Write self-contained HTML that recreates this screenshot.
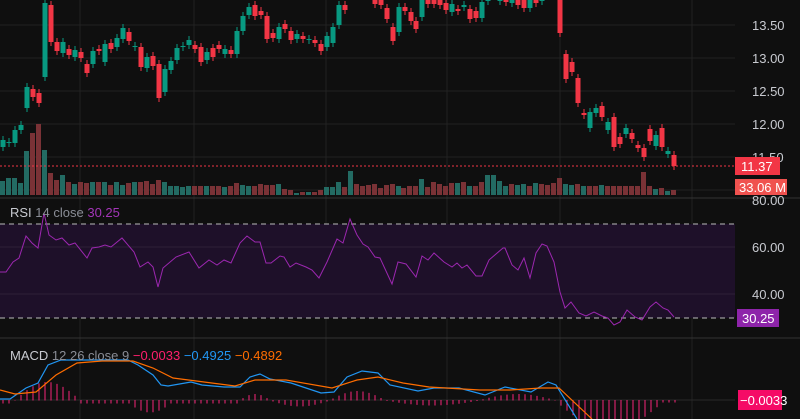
<!DOCTYPE html><html><head><meta charset="utf-8"><style>
html,body{margin:0;padding:0;background:#0f0f0f;width:800px;height:419px;overflow:hidden}
svg{display:block}
text{font-family:"Liberation Sans",sans-serif}
</style></head><body>
<svg id="s" width="800" height="419" xmlns="http://www.w3.org/2000/svg">
<rect width="800" height="419" fill="#0f0f0f"/>
<g id="grid" stroke="#222" stroke-width="1"></g>
<rect x="0" y="224" width="735" height="94" fill="#1e1029"/>
<line x1="0" y1="247" x2="735" y2="247" stroke="#2d1f38"/>
<line x1="0" y1="294" x2="735" y2="294" stroke="#2d1f38"/>
<line x1="0" y1="224" x2="735" y2="224" stroke="#bbb" stroke-dasharray="5,4"/>
<line x1="0" y1="318" x2="735" y2="318" stroke="#bbb" stroke-dasharray="5,4"/>
<line x1="0" y1="198" x2="800" y2="198" stroke="#333"/>
<line x1="0" y1="338" x2="800" y2="338" stroke="#333"/>
<line x1="0" y1="400" x2="735" y2="400" stroke="#2a2a2a"/>
<path fill="#236b63" d="M0,181h5V195h-5Z M6,178h5V195h-5Z M12,178h5V195h-5Z M18,183h5V195h-5Z M24,151h5V195h-5Z M42,150h5V195h-5Z M60,175h5V195h-5Z M72,184h5V195h-5Z M90,182h5V195h-5Z M102,182h5V195h-5Z M114,182h5V195h-5Z M120,185h5V195h-5Z M132,182h5V195h-5Z M162,182h5V195h-5Z M168,186h5V195h-5Z M174,186h5V195h-5Z M180,187h5V195h-5Z M186,186h5V195h-5Z M204,186h5V195h-5Z M222,187h5V195h-5Z M240,185h5V195h-5Z M246,186h5V195h-5Z M276,184h5V195h-5Z M294,193h5V195h-5Z M306,192h5V195h-5Z M324,187h5V195h-5Z M330,187h5V195h-5Z M336,182h5V195h-5Z M348,171h5V195h-5Z M396,186h5V195h-5Z M419,179h5V195h-5Z M455,183h5V195h-5Z M467,186h5V195h-5Z M485,175h5V195h-5Z M491,175h5V195h-5Z M497,181h5V195h-5Z M503,186h5V195h-5Z M515,185h5V195h-5Z M521,184h5V195h-5Z M533,183h5V195h-5Z M563,184h5V195h-5Z M569,185h5V195h-5Z M581,186h5V195h-5Z M599,185h5V195h-5Z M653,189h5V195h-5Z M665,191h5V195h-5Z"/>
<path fill="#7a3236" d="M30,133h5V195h-5Z M36,124h5V195h-5Z M48,173h5V195h-5Z M54,180h5V195h-5Z M66,182h5V195h-5Z M78,182h5V195h-5Z M84,183h5V195h-5Z M96,182h5V195h-5Z M108,185h5V195h-5Z M126,183h5V195h-5Z M138,182h5V195h-5Z M144,181h5V195h-5Z M150,184h5V195h-5Z M156,180h5V195h-5Z M192,186h5V195h-5Z M198,186h5V195h-5Z M210,186h5V195h-5Z M216,186h5V195h-5Z M228,186h5V195h-5Z M234,183h5V195h-5Z M252,186h5V195h-5Z M258,184h5V195h-5Z M264,185h5V195h-5Z M270,185h5V195h-5Z M282,189h5V195h-5Z M288,190h5V195h-5Z M300,192h5V195h-5Z M312,192h5V195h-5Z M318,190h5V195h-5Z M342,187h5V195h-5Z M354,184h5V195h-5Z M360,186h5V195h-5Z M366,185h5V195h-5Z M372,184h5V195h-5Z M378,188h5V195h-5Z M384,185h5V195h-5Z M390,184h5V195h-5Z M401,188h5V195h-5Z M407,186h5V195h-5Z M413,186h5V195h-5Z M425,187h5V195h-5Z M431,182h5V195h-5Z M437,184h5V195h-5Z M443,186h5V195h-5Z M449,183h5V195h-5Z M461,182h5V195h-5Z M473,186h5V195h-5Z M479,182h5V195h-5Z M509,184h5V195h-5Z M527,186h5V195h-5Z M539,184h5V195h-5Z M545,185h5V195h-5Z M551,183h5V195h-5Z M557,178h5V195h-5Z M575,184h5V195h-5Z M587,186h5V195h-5Z M593,186h5V195h-5Z M605,186h5V195h-5Z M611,186h5V195h-5Z M617,186h5V195h-5Z M623,186h5V195h-5Z M629,186h5V195h-5Z M635,186h5V195h-5Z M641,172h5V195h-5Z M647,186h5V195h-5Z M659,188h5V195h-5Z M671,190h5V195h-5Z"/>
<g id="can"></g><g id="hist"></g>
<line x1="0" y1="166" x2="735" y2="166" stroke="#f23645" stroke-dasharray="2,2"/>
<polyline fill="none" stroke="#9c27b0" stroke-width="1" points="0,272 6,272 13,262 19,258 26,236 32,243 38,248 44,213 49,235 56,240 62,238 69,245 75,243 87,258 92,248 99,247 105,245 111,247 122,238 134,252 140,267 148,262 153,267 158,287 163,268 176,257 189,252 199,268 209,260 217,265 224,260 231,263 240,243 247,236 255,242 260,242 266,263 271,263 280,256 284,257 290,267 296,263 306,267 312,270 319,278 327,262 337,239 343,243 350,219 357,235 363,244 368,247 375,257 380,258 392,284 398,262 406,264 416,277 422,256 428,260 434,253 444,262 452,267 457,263 462,268 467,265 476,276 482,276 489,260 503,248 505,248 512,265 518,270 524,258 530,278 536,253 542,244 547,246 554,262 560,292 565,308 571,302 579,313 586,316 594,312 602,316 608,318 614,325 620,322 627,310 635,317 642,320 650,307 656,302 663,308 668,310 674,317"/>
<polyline fill="none" stroke="#2196f3" stroke-width="1.2" points="0,399 10,399 26,388 38,383 48,365 61,360 82,360 128,360 138,365 153,375 161,385 168,386 191,382 202,385 224,387 240,387 250,377 260,374 270,379 291,383 306,388 321,393 334,392 347,377 362,371 378,373 390,385 418,391 434,388 459,388 485,395 505,387 531,392 548,382 556,385 577,419"/>
<polyline fill="none" stroke="#ff6d00" stroke-width="1.2" points="0,390 15,394 36,392 56,375 77,363 102,361 133,361 153,368 173,378 204,382 235,386 255,380 286,380 332,388 357,380 378,377 403,383 429,387 480,390 510,390 541,388 559,388 592,419"/>
<g font-size="13" fill="#c8cad0">
<text x="752" y="30">13.50</text><text x="752" y="63">13.00</text><text x="752" y="96">12.50</text><text x="752" y="129">12.00</text><text x="752" y="162">11.50</text>
<text x="752" y="205">80.00</text><text x="752" y="252">60.00</text><text x="752" y="299">40.00</text>
</g>
<rect x="735" y="157" width="45" height="18" fill="#f23645"/><text x="741" y="171" font-size="13" fill="#fff">11.37</text>
<rect x="735" y="179" width="52" height="16" fill="#f0524f"/><text x="739" y="192" font-size="13" fill="#fff">33.06 M</text>
<rect x="737" y="309" width="42" height="18" fill="#8e24aa"/><text x="742" y="323" font-size="13" fill="#fff">30.25</text>
<rect x="738" y="390" width="44" height="20" fill="#f50b66"/><text x="740" y="405" font-size="13" fill="#fff">−0.0033</text>
<text x="10" y="217" font-size="13" fill="#c8cad0">RSI <tspan fill="#8a8d96">14 close</tspan> <tspan fill="#a335b8">30.25</tspan></text>
<text x="10" y="360" font-size="13" fill="#c8cad0">MACD <tspan fill="#8a8d96">12 26 close 9</tspan> <tspan fill="#ff1f6d">−0.0033</tspan> <tspan fill="#2196f3">−0.4925</tspan> <tspan fill="#ff6d00">−0.4892</tspan></text>
</svg>
<script>
var NS="http://www.w3.org/2000/svg";
function el(p,t,a){var e=document.createElementNS(NS,t);for(var k in a)e.setAttribute(k,a[k]);document.getElementById(p).appendChild(e);}
[25,58,91,124,157,190].forEach(function(y){el("grid","line",{x1:0,y1:y,x2:735,y2:y});});
[80,194,326,447,560,692].forEach(function(x){el("grid","line",{x1:x,y1:0,x2:x,y2:419});});
var c=[[3,'g',140,147],[9,'g',142,143],[15,'g',130,143],[21,'g',125,130],[27,'g',87,108],[33,'r',89,97],[39,'r',93,103],[45,'g',3,77],[51,'r',5,42],[57,'r',42,51],[63,'g',42,53],[69,'r',49,55],[75,'g',50,57],[81,'r',52,58],[87,'r',64,73],[93,'g',51,64],[99,'r',49,51],[105,'g',44,62],[111,'r',43,49],[117,'g',38,47],[123,'g',28,39],[129,'r',32,41],[135,'g',46,47],[141,'r',47,67],[147,'g',57,68],[153,'r',56,66],[159,'r',64,98],[165,'g',69,92],[171,'g',61,70],[177,'g',48,60],[183,'g',46,47],[189,'g',40,45],[195,'r',45,49],[201,'r',47,62],[207,'g',52,60],[213,'r',48,57],[219,'r',45,49],[225,'g',49,54],[231,'r',50,54],[237,'g',31,54],[243,'g',16,31],[249,'g',7,15],[255,'r',5,16],[261,'r',11,15],[267,'r',16,39],[273,'r',33,38],[279,'g',27,39],[285,'r',24,29],[291,'r',31,40],[297,'g',34,39],[303,'r',36,39],[309,'g',39,40],[315,'r',40,43],[321,'r',44,51],[327,'g',36,47],[333,'g',27,43],[339,'g',5,25],[345,'r',5,10],[375,'r',-2,4],[381,'r',-2,5],[387,'r',8,19],[393,'r',27,41],[399,'g',7,32],[405,'r',7,11],[411,'r',12,21],[416,'r',21,29],[422,'g',0,17],[428,'r',0,4],[434,'r',0,4],[440,'r',0,5],[446,'r',3,10],[452,'g',4,12],[458,'r',9,11],[464,'g',5,7],[470,'r',9,19],[476,'r',11,18],[482,'g',2,18],[488,'g',0,1],[500,'g',0,1],[506,'r',0,2],[512,'g',0,3],[518,'r',0,5],[524,'r',0,8],[530,'g',0,8],[536,'r',0,3],[542,'g',0,1],[560,'r',-2,33],[566,'r',54,79],[572,'r',62,72],[578,'r',78,103],[584,'r',113,115],[590,'g',112,128],[596,'g',108,113],[602,'r',106,117],[608,'g',122,130],[614,'r',117,147],[620,'r',137,144],[626,'g',128,134],[632,'r',133,139],[638,'r',145,148],[644,'r',148,157],[650,'r',129,141],[656,'g',135,146],[662,'r',128,147],[668,'g',151,154],[674,'r',155,166]];
c.forEach(function(d){var col=d[1]=='g'?'#089981':'#f23645';var h=Math.max(1,d[3]-d[2]);
el("can","line",{x1:d[0],x2:d[0],y1:d[2]-4,y2:d[3]+4,stroke:col});
el("can","rect",{x:d[0]-2.5,y:d[2],width:5,height:h,fill:col});});
for(var x=3;x<=676;x+=6){var v;
if(x<15)v=-3;else if(x<80)v=18*Math.sin((x-15)/65*Math.PI);else if(x<125)v=-3;else if(x<175)v=-12*Math.sin((x-125)/50*Math.PI);else if(x<240)v=-3;else if(x<270)v=6*Math.sin((x-240)/30*Math.PI);else if(x<330)v=-6*Math.sin((x-270)/60*Math.PI);else if(x<385)v=9*Math.sin((x-330)/55*Math.PI);else if(x<480)v=-5*Math.sin((x-385)/95*Math.PI);else if(x<555)v=6*Math.sin((x-480)/75*Math.PI);else if(x<660)v=-Math.min(25,30*Math.sin((x-555)/110*Math.PI));else v=-2;
var y1=400,y2=400-v;el("hist","line",{x1:x,x2:x,y1:Math.min(y1,y2),y2:Math.max(y1,y2)+0.5,stroke:'#f7257a','stroke-width':1});}
</script>
</body></html>
